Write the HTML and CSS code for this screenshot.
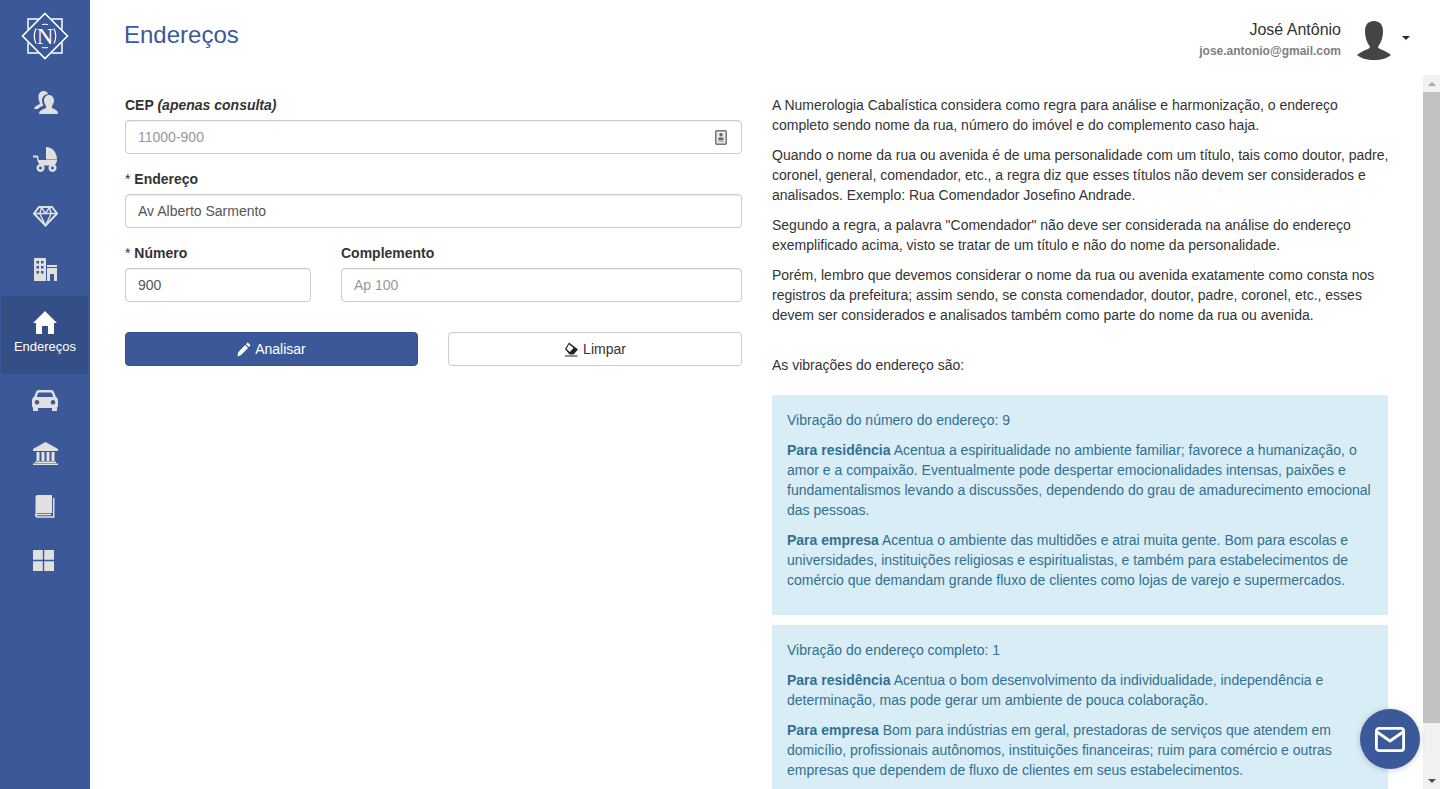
FILE: index.html
```html
<!DOCTYPE html>
<html lang="pt-BR">
<head>
<meta charset="utf-8">
<title>Endereços</title>
<link rel="stylesheet" href="styles.css">
</head>
<body>
<div class="app">
  <nav class="sidebar">
    <div class="logo">
      <svg width="48" height="48" viewBox="0 0 48 48" fill="none" stroke="#fff">
        <path d="M24 1.500 46.500 24 24 46.500 1.500 24Z" stroke-width="1.600"/>
        <path d="M17.500 7H7V17.500M30.500 7H41V17.500M41 30.500V41H30.500M17.500 41H7V30.500" stroke-width="1.500"/>
        <path d="M15 16.500Q11.500 24 15 31.500M33 16.500Q36.500 24 33 31.500M21 12.500Q24 12 27 12.500M21 35.500Q24 36 27 35.500" stroke-width="1.200"/>
        <text x="24" y="31.500" text-anchor="middle" class="logo-n">N</text>
      </svg>
    </div>
    <a class="nav-item nav-gap">
      <svg width="25" height="23" viewBox="0 0 25 23"><path fill="#e0e0e0" d="M1 18C1.500 15.500 3.500 14.500 6 13.500 7 13 7 12 6.500 11 5.800 9.500 5.500 8 5.500 6 5.500 2.500 7.500 0 10.500 0 13 0 14.500 1.300 15 3 11.500 3.300 9 6 9 9.500 9 11.500 9.500 13 10.500 14.500 8 15.500 6 16.500 5 18Z"/><path fill="#e0e0e0" d="M6 23C6 20.500 8 19 11.500 17.800 13.200 17.200 13.500 16 13 15 12 13.500 11 11.500 11 9.500 11 6.500 13 4 16 4 19 4 21 6.500 21 9.500 21 11.500 20 13.500 19 15 18.500 16 18.800 17.200 20.500 17.800 23 18.700 25 20 25 23Z"/></svg>
    </a>
    <a class="nav-item nav-gap">
      <svg width="24" height="25" viewBox="0 0 24 25"><path fill="#e0e0e0" d="M13 0c6.200 0 11 5.300 11 12.500H13Z"/><path fill="#e0e0e0" d="M0 8.500h3.500c1 0 1.500.5 1.700 1.300l.6 3.200H24c0 2.600-1.200 4.500-3 5.500H8C5.800 17.500 4.500 15 3.800 10.500H0Z"/><path fill="none" stroke="#e0e0e0" stroke-width="2.500" d="M7.500 18.250a2.750 2.750 0 1 0 .01 0M19.500 18.250a2.750 2.750 0 1 0 .01 0"/></svg>
    </a>
    <a class="nav-item">
      <svg width="25" height="21" viewBox="0 0 25 21" fill="none" stroke="#e0e0e0" stroke-width="2"><path d="M6 1h13l5 6.500L12.500 19.500 1 7.500Z"/><path d="M1 7.500h23M8.500 1.500 6.800 7.500l5.700 12 5.700-12-1.700-6M8.500 1.500l4 6 4-6" stroke-width="1.400"/></svg>
    </a>
    <a class="nav-item">
      <svg width="23" height="23" viewBox="0 0 23 23"><path fill="#e0e0e0" fill-rule="evenodd" d="M0 0h12v23H0ZM2.500 3v2.500H5V3Zm4.500 0v2.500h2.500V3ZM2.500 8v2.500H5V8ZM7 8v2.500h2.500V8Zm-4.500 5v2.500H5V13ZM7 13v2.500h2.500V13Z"/><path fill="#e0e0e0" d="M13 7h10v2H13Z"/><path fill="#e0e0e0" fill-rule="evenodd" d="M13 10h10v13h-3v-7h-4v7h-3Z"/></svg>
    </a>
    <a class="nav-item nav-item-active">
      <svg width="24" height="23" viewBox="0 0 24 23"><path fill="#fff" d="M12 0 24 12h-3v11h-6v-8H9v8H3V12H0Z"/></svg>
      <span class="nav-label">Endereços</span>
    </a>
    <a class="nav-item">
      <svg width="26" height="21" viewBox="0 0 26 21"><path fill="#e0e0e0" fill-rule="evenodd" d="M7 0h12c1.500 0 2.500.8 3 2l1.700 4.500C25 7.300 26 9 26 11v5c0 .8-.4 1.300-1 1.500V21h-5v-3H6v3H1v-3.500C.4 17.300 0 16.800 0 16v-5c0-2 1-3.700 2.300-4.500L4 2c.5-1.200 1.500-2 3-2Zm0 2.500c-.5 0-.8.200-1 .7L4.800 7h16.400L20 3.200c-.2-.5-.5-.7-1-.7ZM5 10a2.300 2.300 0 1 0 .01 0ZM21 10a2.300 2.300 0 1 0 .01 0Z"/></svg>
    </a>
    <a class="nav-item">
      <svg width="25" height="23" viewBox="0 0 25 23"><path fill="#e0e0e0" d="M12.500 0 25 7v2H0V7ZM3.500 10h3v9h-3ZM8.500 10h3v9h-3ZM13.500 10h3v9h-3ZM18.500 10h3v9h-3ZM2 19.500h21V21H2ZM0 21.500h25V23H0Z"/></svg>
    </a>
    <a class="nav-item">
      <svg width="20" height="23" viewBox="0 0 20 23"><path fill="#e0e0e0" d="M2.500 0H17v18H4c-1.500 0-3 .6-3.500 1.600V2.500C.5 1 1.200 0 2.500 0Z"/><path fill="none" stroke="#e0e0e0" stroke-width="1.500" d="M18.700 3V22H3.500C1.500 22 .7 21.300.7 20.300S1.500 19.500 3.500 19.500H16"/></svg>
    </a>
    <a class="nav-item">
      <svg class="icon-grid" width="21" height="21" viewBox="0 0 21 21"><path fill="#e0e0e0" d="M0 0h9.800v9.800H0ZM11.200 0H21v9.800h-9.800ZM0 11.200h9.800V21H0ZM11.200 11.200H21V21h-9.800Z"/></svg>
    </a>
  </nav>

  <div class="main">
    <header class="topbar">
      <h1 class="page-title">Endereços</h1>
      <div class="user">
        <div class="user-text">
          <div class="user-name">José Antônio</div>
          <div class="user-email">jose.antonio@gmail.com</div>
        </div>
        <svg class="avatar" width="34" height="39" viewBox="0 0 34 39"><path fill="#444" d="M17 0c5.500 0 9 3.500 9 10 0 6-1.500 11-4.500 15-.6 1.200-.4 2.200 1.500 3 4.500 1.500 8 3.500 11 6-3.500 3-9.500 5-17 5S3.500 37 0 34c3-2.500 6.500-4.500 11-6 1.900-.8 2.100-1.800 1.500-3C9.500 21 8 16 8 10 8 3.500 11.500 0 17 0Z"/></svg>
        <span class="caret"></span>
      </div>
    </header>

    <div class="scroll-area">
      <div class="scroll">
        <div class="columns">
          <form class="form-col">
            <div class="field">
              <label class="field-label">CEP <em>(apenas consulta)</em></label>
              <div class="input-wrap">
                <input class="input" type="text" placeholder="11000-900">
                <svg class="input-icon" width="12" height="15" viewBox="0 0 12 15"><rect x=".75" y=".75" width="10.500" height="13.500" rx="1" fill="#e8e8e8" stroke="#777" stroke-width="1.500"/><path fill="#666" d="M6 3a1.700 1.700 0 1 1-.01 0ZM3.500 7.500h5V10h-5Z"/><path fill="#aaa" d="M3.500 10.500h5V12h-5Z"/></svg>
              </div>
            </div>
            <div class="field">
              <label class="field-label"><span class="req">*</span> Endereço</label>
              <input class="input" type="text" value="Av Alberto Sarmento">
            </div>
            <div class="field-row">
              <div class="field">
                <label class="field-label"><span class="req">*</span> Número</label>
                <input class="input" type="text" value="900">
              </div>
              <div class="field">
                <label class="field-label">Complemento</label>
                <input class="input" type="text" placeholder="Ap 100">
              </div>
            </div>
            <div class="actions">
              <button class="btn btn-primary" type="button">
                <svg width="14" height="15" viewBox="0 0 14 15"><path fill="#fff" d="M10.800.500 13.500 3.200 11.800 5 9 2.300ZM8.200 3.100 11 5.900 4 13 .5 14.500 1.200 10.200Z"/></svg>
                Analisar
              </button>
              <button class="btn btn-default" type="button">
                <svg width="15" height="15" viewBox="0 0 15 15"><path fill="#222" d="M5 .5 14 7.500 9.500 12.500H5.500L1 7Z"/><path fill="#fff" d="M5 2.200 9.500 6 5.900 10 2.500 7Z"/><path fill="#222" d="M1 13.500h12.500v1H1Z"/></svg>
                Limpar
              </button>
            </div>
          </form>

          <section class="info-col">
            <p class="intro">A Numerologia Cabalística considera como regra para análise e harmonização, o endereço completo sendo nome da rua, número do imóvel e do complemento caso haja.</p>
            <p class="intro">Quando o nome da rua ou avenida é de uma personalidade com um título, tais como doutor, padre, coronel, general, comendador, etc., a regra diz que esses títulos não devem ser considerados e analisados. Exemplo: Rua Comendador Josefino Andrade.</p>
            <p class="intro">Segundo a regra, a palavra "Comendador" não deve ser considerada na análise do endereço exemplificado acima, visto se tratar de um título e não do nome da personalidade.</p>
            <p class="intro">Porém, lembro que devemos considerar o nome da rua ou avenida exatamente como consta nos registros da prefeitura; assim sendo, se consta comendador, doutor, padre, coronel, etc., esses devem ser considerados e analisados também como parte do nome da rua ou avenida.</p>
            <p class="lead-in">As vibrações do endereço são:</p>
            <div class="alert">
              <p>Vibração do número do endereço: 9</p>
              <p><strong>Para residência</strong> Acentua a espiritualidade no ambiente familiar; favorece a humanização, o amor e a compaixão. Eventualmente pode despertar emocionalidades intensas, paixões e fundamentalismos levando a discussões, dependendo do grau de amadurecimento emocional das pessoas.</p>
              <p><strong>Para empresa</strong> Acentua o ambiente das multidões e atrai muita gente. Bom para escolas e universidades, instituições religiosas e espiritualistas, e também para estabelecimentos de comércio que demandam grande fluxo de clientes como lojas de varejo e supermercados.</p>
            </div>
            <div class="alert">
              <p>Vibração do endereço completo: 1</p>
              <p><strong>Para residência</strong> Acentua o bom desenvolvimento da individualidade, independência e determinação, mas pode gerar um ambiente de pouca colaboração.</p>
              <p><strong>Para empresa</strong> Bom para indústrias em geral, prestadoras de serviços que atendem em domicílio, profissionais autônomos, instituições financeiras; ruim para comércio e outras empresas que dependem de fluxo de clientes em seus estabelecimentos.</p>
            </div>
          </section>
        </div>
      </div>
      <div class="scrollbar" aria-hidden="true">
        <div class="sb-btn"><span class="sb-up"></span></div>
        <div class="sb-thumb"></div>
        <div class="sb-track"></div>
        <div class="sb-btn"><span class="sb-down"></span></div>
      </div>
    </div>
  </div>

  <button class="fab" type="button" aria-label="Contato">
    <svg width="30" height="25" viewBox="0 0 30 25" fill="none" stroke="#fff" stroke-width="2.800" stroke-linejoin="round"><rect x="1.400" y="1.400" width="27.200" height="22.200" rx="2.500"/><path d="M2 5 15 14 28 5"/></svg>
  </button>
</div>
</body>
</html>
```

FILE: styles.css
```css
* {
  box-sizing: border-box;
}

html,
body {
  height: 100%;
  margin: 0;
}

body {
  font-family: "Liberation Sans", Arial, sans-serif;
  font-size: 14px;
  line-height: 20px;
  color: #333;
  background: #fff;
  overflow: hidden;
}

.app {
  display: flex;
  height: 100vh;
  position: relative;
}

/* Sidebar */
.sidebar {
  width: 90px;
  flex: none;
  background: #3b5998;
  padding: 0 2px;
  display: flex;
  flex-direction: column;
}

.logo {
  height: 76px;
  flex: none;
  display: flex;
  justify-content: center;
  padding-top: 12px;
}

.logo-n {
  font-family: "Liberation Serif", serif;
  font-size: 23px;
  fill: #fff;
  stroke: none;
}

.nav-item {
  height: 53px;
  flex: none;
  display: flex;
  flex-direction: column;
  align-items: center;
  justify-content: center;
}

.nav-gap {
  margin-bottom: 4px;
}

.nav-item-active {
  height: 78px;
  margin-left: -1px;
  padding: 15px 0 0 1px;
  justify-content: flex-start;
  background: #344e86;
  color: #fff;
  font-size: 13px;
  line-height: 14px;
}

.nav-label {
  margin-top: 6px;
}

.icon-grid {
  margin: 1px 3px 0 0;
}

/* Main column */
.main {
  flex: 1;
  min-width: 0;
  display: flex;
  flex-direction: column;
}

.topbar {
  height: 75px;
  flex: none;
  display: flex;
  justify-content: space-between;
  padding: 0 30px 0 34px;
}

.page-title {
  margin: 21px 0 0;
  font-size: 24px;
  line-height: 28px;
  font-weight: 400;
  color: #3b5998;
}

.user {
  display: flex;
  align-items: flex-start;
  padding-top: 21px;
}

.user-text {
  text-align: right;
  margin-right: 16px;
}

.user-name {
  font-size: 16px;
  line-height: 18px;
  color: #333;
}

.user-email {
  font-size: 12px;
  line-height: 14px;
  font-weight: 700;
  color: #808080;
  margin-top: 5px;
}

.avatar {
  flex: none;
}

.caret {
  width: 0;
  height: 0;
  border-left: 4px solid transparent;
  border-right: 4px solid transparent;
  border-top: 4px solid #1d2b3a;
  margin: 15px 0 0 11px;
}

/* Scrolling content */
.scroll-area {
  flex: 1;
  min-height: 0;
  display: flex;
}

.scroll {
  flex: 1;
  min-width: 0;
  overflow-y: auto;
  scrollbar-width: none;
}

.scrollbar {
  width: 17px;
  flex: none;
  display: flex;
  flex-direction: column;
  background: #f1f1f1;
}

.sb-btn {
  height: 17px;
  flex: none;
  display: flex;
  align-items: center;
  justify-content: center;
}

.sb-up,
.sb-down {
  width: 0;
  height: 0;
  border-left: 4px solid transparent;
  border-right: 4px solid transparent;
}

.sb-up {
  border-bottom: 4px solid #a3a3a3;
}

.sb-down {
  border-top: 4px solid #505050;
}

.sb-thumb {
  height: 631px;
  flex: none;
  background: #c1c1c1;
}

.sb-track {
  flex: 1;
}

.columns {
  display: grid;
  grid-template-columns: 617px 616px;
  column-gap: 30px;
  padding: 20px 0 40px 35px;
}

/* Form */
.field {
  margin-bottom: 15px;
}

.field-label {
  display: block;
  margin-bottom: 5px;
  font-weight: 700;
}

.req {
  font-weight: 400;
}

.input-wrap {
  position: relative;
}

.input {
  display: block;
  width: 100%;
  height: 34px;
  padding: 6px 12px;
  font: inherit;
  color: #555;
  background: #fff;
  border: 1px solid #ccc;
  border-radius: 4px;
  box-shadow: inset 0 1px 1px rgba(0, 0, 0, 0.075);
}

.input::placeholder {
  color: #999;
  opacity: 1;
}

.input-icon {
  position: absolute;
  top: 10px;
  right: 15px;
}

.field-row {
  display: grid;
  grid-template-columns: 186px 1fr;
  column-gap: 30px;
}

.actions {
  display: grid;
  grid-template-columns: 293px 294px;
  column-gap: 30px;
  padding-top: 15px;
}

.btn {
  display: flex;
  align-items: center;
  justify-content: center;
  gap: 4px;
  height: 34px;
  font: inherit;
  border-radius: 4px;
  border: 1px solid #ccc;
  background: #fff;
  color: #333;
}

.btn-primary {
  background: #3b5998;
  border-color: #344e86;
  color: #fff;
}

/* Info column */
.info-col p {
  margin: 0 0 10px;
}

.info-col .intro {
  margin-right: -2px;
}

.info-col .lead-in {
  margin: 30px 0 20px;
}

.alert {
  padding: 15px;
  margin-bottom: 10px;
  background: #d9edf7;
  color: #31708f;
}

.fab {
  position: absolute;
  left: 1360px;
  top: 709px;
  width: 60px;
  height: 60px;
  padding: 0;
  border: 0;
  border-radius: 50%;
  background: #3b5998;
  box-shadow: 0 1px 6px rgba(0, 0, 0, 0.2);
  display: flex;
  align-items: center;
  justify-content: center;
}
```
